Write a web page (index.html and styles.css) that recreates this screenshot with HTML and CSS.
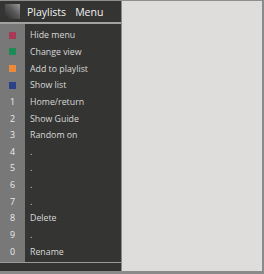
FILE: index.html
```html
<!DOCTYPE html>
<html lang="en">
<head>
  <meta charset="UTF-8" />
  <title>Playlists Menu</title>
  <link rel="stylesheet" href="styles.css">
</head>
<body>
  <div class="frame">
    <div class="menu">
      <div class="menu-head">
        <span class="logo"></span>
        <span class="title">Playlists</span>
        <span class="title title-menu">Menu</span>
      </div>
      <ul class="keys">
        <li><span class="key"><i class="swatch red"></i></span><span class="label">Hide menu</span></li>
        <li><span class="key"><i class="swatch green"></i></span><span class="label">Change view</span></li>
        <li><span class="key"><i class="swatch orange"></i></span><span class="label">Add to playlist</span></li>
        <li><span class="key"><i class="swatch blue"></i></span><span class="label">Show list</span></li>
        <li><span class="key">1</span><span class="label">Home/return</span></li>
        <li><span class="key">2</span><span class="label">Show Guide</span></li>
        <li><span class="key">3</span><span class="label">Random on</span></li>
        <li><span class="key">4</span><span class="label">.</span></li>
        <li><span class="key">5</span><span class="label">.</span></li>
        <li><span class="key">6</span><span class="label">.</span></li>
        <li><span class="key">7</span><span class="label">.</span></li>
        <li><span class="key">8</span><span class="label">Delete</span></li>
        <li><span class="key">9</span><span class="label">.</span></li>
        <li><span class="key">0</span><span class="label">Rename</span></li>
      </ul>
      <div class="menu-foot"></div>
    </div>
    <div class="view"></div>
  </div>
</body>
</html>
```

FILE: styles.css
```css
body {
  margin: 0;
  font-family: "Open Sans", "DejaVu Sans", sans-serif;
  background: #8c8c8c;
}
.frame {
  display: flex;
  width: 264px;
  height: 274px;
  box-sizing: border-box;
  border-top: 1px solid #8e8e8e;
  border-right: 2px solid #8a8a8a;
  border-bottom: 3px solid #8a8a8a;
}
.menu {
  width: 121px;
  display: flex;
  flex-direction: column;
  background: #343432;
  border-right: 1px solid #8a8a8a;
}
.menu-head {
  height: 21px;
  display: flex;
  align-items: center;
  padding-left: 5px;
  border-bottom: 2px solid #a2a2a2;
}
.logo {
  width: 15px;
  height: 15px;
  margin-right: 7px;
  background: linear-gradient(225deg, #9a9a9a 0%, #5a5a5a 45%, #2a2a2a 100%);
}
.title {
  color: #f2f2f2;
  font-size: 10.5px;
}
.title-menu {
  margin-left: 9px;
}
.keys {
  list-style: none;
  margin: 0;
  padding: 3px 0 2px;
  height: 239px;
  box-sizing: border-box;
  display: grid;
  grid-template-rows: repeat(14, 1fr);
  background: linear-gradient(to right, #787878 25px, transparent 25px);
  border-bottom: 1px solid #9a9a9a;
}
.keys li {
  display: flex;
  align-items: center;
}
.key {
  width: 25px;
  display: flex;
  justify-content: center;
  color: #ececec;
  font-size: 8.8px;
}
.label {
  padding-left: 5px;
  color: #d9d9d9;
  font-size: 8.8px;
}
.swatch {
  display: block;
  width: 7px;
  height: 7px;
}
.red { background: #a93a56; }
.green { background: #1f8a55; }
.orange { background: #ec8a3c; }
.blue { background: #2b4288; }
.menu-foot {
  height: 7px;
}
.view {
  flex: 1;
  background: #dedddb;
}
```
